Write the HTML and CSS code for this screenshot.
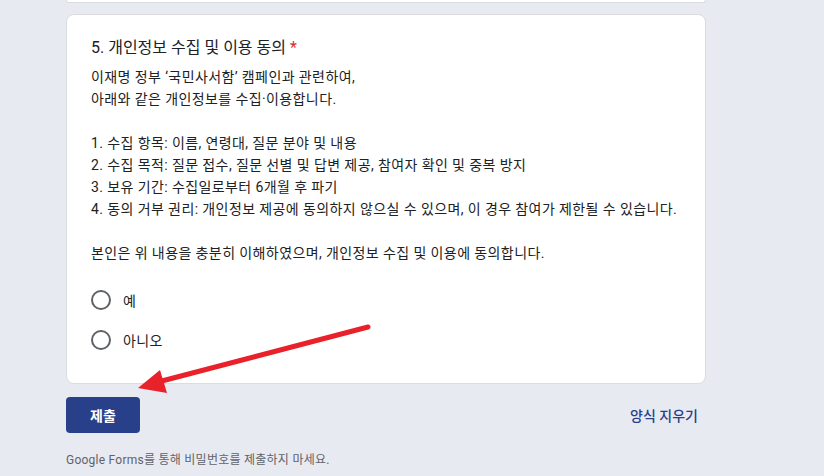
FILE: index.html
```html
<!DOCTYPE html>
<html lang="ko">

<head>
  <meta charset="UTF-8">
  <meta name="viewport" content="width=device-width, initial-scale=1.0">
  <title>개인정보 수집 및 이용 동의</title>
  <link rel="stylesheet" href="styles.css">
</head>

<body>

  <main class="form-wrap">
    <div class="prev-card"></div>

    <section class="card">
      <h2 class="question">5. 개인정보 수집 및 이용 동의 <span class="required">*</span></h2>

      <div class="desc">
        <p>이재명 정부 ‘국민사서함’ 캠페인과 관련하여,<br>아래와 같은 개인정보를 수집·이용합니다.</p>
        <p>1. 수집 항목: 이름, 연령대, 질문 분야 및 내용<br>
          2. 수집 목적: 질문 접수, 질문 선별 및 답변 제공, 참여자 확인 및 중복 방지<br>
          3. 보유 기간: 수집일로부터 6개월 후 파기<br>
          4. 동의 거부 권리: 개인정보 제공에 동의하지 않으실 수 있으며, 이 경우 참여가 제한될 수 있습니다.</p>
        <p>본인은 위 내용을 충분히 이해하였으며, 개인정보 수집 및 이용에 동의합니다.</p>
      </div>

      <div class="options">
        <label class="option"><span class="radio"></span>예</label>
        <label class="option"><span class="radio"></span>아니오</label>
      </div>
    </section>

    <div class="actions">
      <button type="submit" class="submit-btn">제출</button>
      <button type="button" class="clear-btn">양식 지우기</button>
    </div>

    <p class="notice">Google Forms를 통해 비밀번호를 제출하지 마세요.</p>
  </main>

  <!-- annotation arrow -->
  <svg class="arrow" width="824" height="476" viewBox="0 0 824 476">
    <line x1="368" y1="327" x2="158" y2="382" stroke="#e8212b" stroke-width="5" stroke-linecap="round" />
    <polygon points="138,388 160,370 167,393" fill="#e8212b" />
  </svg>

</body>

</html>
```

FILE: styles.css
```css
body {
  margin: 0;
  background: #e8eaf2;
  font-family: Roboto, "Noto Sans CJK KR", sans-serif;
  color: #202124;
  position: relative;
  height: 476px;
  overflow: hidden;
}

.form-wrap {
  width: 640px;
  margin-left: 66px;
}

.prev-card {
  height: 2px;
  background: #fff;
  border: 1px solid #dadce0;
  border-top: none;
  border-radius: 0 0 8px 8px;
}

/* Question card */
.card {
  margin-top: 11px;
  background: #fff;
  border: 1px solid #dadce0;
  border-radius: 8px;
  padding: 23px 24px 23px;
}

.question {
  margin: 0;
  font-size: 16px;
  font-weight: 400;
  line-height: 20px;
}

.required {
  color: #d93025;
}

.desc {
  margin-top: 8px;
  font-size: 14px;
  line-height: 22px;
  letter-spacing: 0.4px;
}

.desc p {
  margin: 0 0 22px;
}

.desc p:last-child {
  margin-bottom: 0;
}

.options {
  margin-top: 16px;
  display: flex;
  flex-direction: column;
}

.option {
  display: flex;
  align-items: center;
  gap: 12px;
  height: 40px;
  font-size: 14px;
  letter-spacing: 0.4px;
}

.radio {
  width: 16px;
  height: 16px;
  border: 2px solid #5f6368;
  border-radius: 50%;
}

/* Footer actions */
.actions {
  margin-top: 13px;
  display: flex;
  justify-content: space-between;
  align-items: center;
}

.submit-btn {
  width: 74px;
  height: 36px;
  border: none;
  border-radius: 4px;
  background: #283f8a;
  color: #fff;
  font-family: inherit;
  font-size: 14px;
  font-weight: 700;
}

.clear-btn {
  border: none;
  background: none;
  padding: 0 8px;
  height: 36px;
  color: #283f8a;
  font-family: inherit;
  font-size: 14px;
  font-weight: 500;
}

.notice {
  margin: 17px 0 0;
  font-size: 12px;
  letter-spacing: 0.25px;
  color: #5f6368;
}

.arrow {
  position: absolute;
  left: 0;
  top: 0;
}
```
